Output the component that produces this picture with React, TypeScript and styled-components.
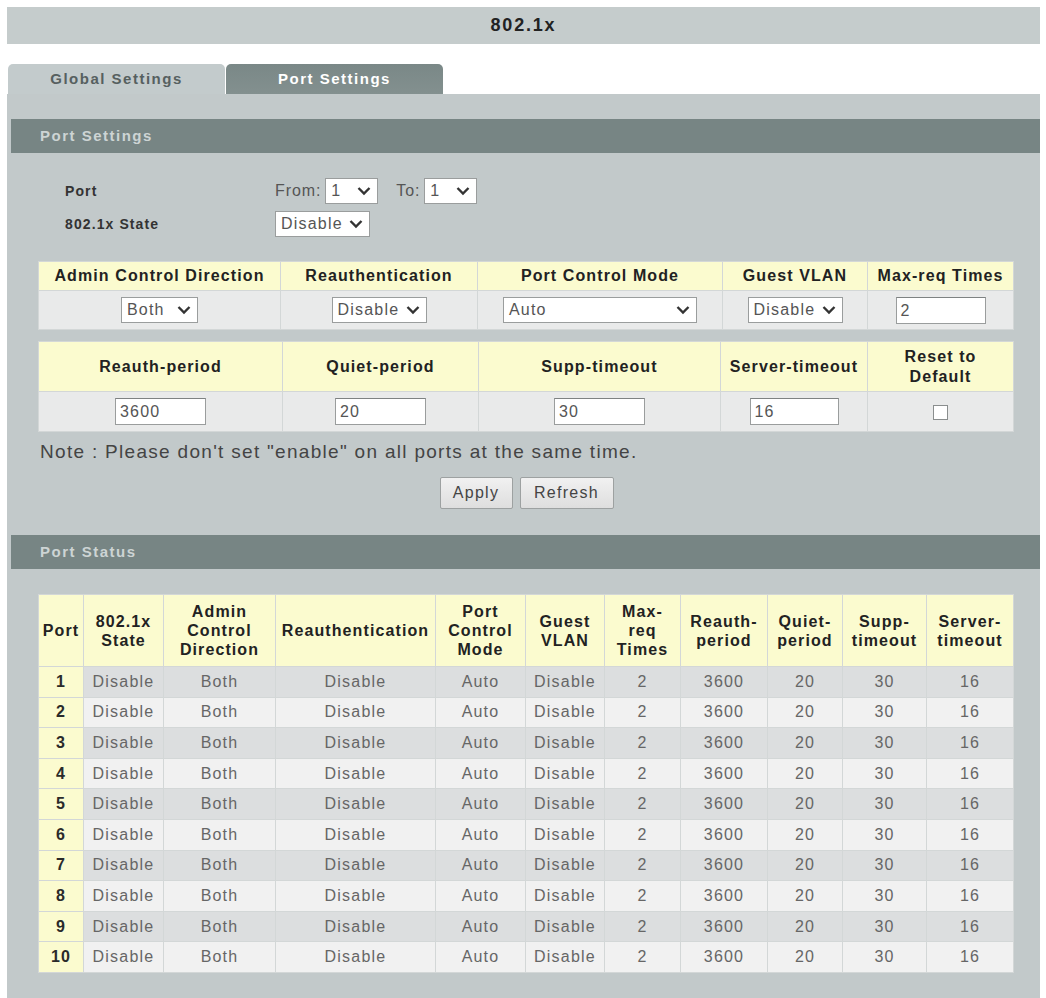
import React from 'react'
import styled, { createGlobalStyle } from 'styled-components'

const GlobalStyle = createGlobalStyle`
  html, body {
    margin: 0;
    padding: 0;
    background: #ffffff;
    font-family: "Liberation Sans", Arial, sans-serif;
  }
`

const colors = {
  panel: '#c2c9ca',
  title: '#c5cccc',
  bar: '#778584',
  barText: '#cdd4d4',
  yellow: '#fbfbcf',
  cellBorder: '#d3d7d7',
  rowDark: '#dcdedf',
  rowLight: '#f1f1f1',
  dataCell: '#e9eaea',
  text: '#222222',
  muted: '#666666',
}

// the screenshot is a bit wider than tall, so text gets extra tracking
const Page = styled.div`
  width: 1033px;
  padding: 7px 6px 0 7px;
  letter-spacing: 1.1px;
`

const TitleBar = styled.div`
  height: 37px;
  line-height: 37px;
  background: ${colors.title};
  text-align: center;
  font-size: 18px;
  letter-spacing: 1.8px;
  font-weight: 700;
  color: ${colors.text};
`

const TabRow = styled.div`
  display: flex;
  margin-top: 20px;
  padding-left: 1px;
  gap: 1px;
`

const Tab = styled.div<{ $active?: boolean }>`
  width: 217px;
  height: 30px;
  line-height: 30px;
  text-align: center;
  border-radius: 5px 5px 0 0;
  font-size: 15px;
  letter-spacing: 1.5px;
  font-weight: 700;
  background: ${({ $active }) => ($active ? 'linear-gradient(#7a8887, #83908f)' : '#c3cbcc')};
  color: ${({ $active }) => ($active ? '#ffffff' : '#566060')};
`

const Panel = styled.div`
  background: ${colors.panel};
  padding: 25px 0 25px 4px;
`

const SectionBar = styled.div<{ $gap?: number }>`
  height: 34px;
  line-height: 34px;
  margin-top: ${({ $gap }) => $gap ?? 0}px;
  padding-left: 29px;
  background: ${colors.bar};
  color: ${colors.barText};
  font-size: 15px;
  letter-spacing: 1.5px;
  font-weight: 700;
`

const Form = styled.div`
  display: grid;
  grid-template-columns: 210px auto;
  grid-auto-rows: 26px;
  row-gap: 7px;
  align-items: center;
  margin-top: 25px;
  padding-left: 54px;
`

const FormLabel = styled.div`
  font-size: 14px;
  letter-spacing: 1.1px;
  font-weight: 700;
  color: #333;
`

const FormControls = styled.div`
  display: flex;
  align-items: center;
  gap: 4px;
  font-size: 16px;
  letter-spacing: 0.9px;
  color: #555;
`

const Spacer = styled.span`
  width: 10px;
`

const SelectBox = styled.span<{ $width: number }>`
  display: inline-flex;
  align-items: center;
  justify-content: space-between;
  box-sizing: border-box;
  width: ${({ $width }) => $width}px;
  height: 26px;
  padding: 0 6px 0 5px;
  background: #ffffff;
  border: 1px solid #9a9d9d;
  font-size: 16px;
  letter-spacing: 1.2px;
  color: #555;
  text-align: left;
  vertical-align: middle;
`

const Chevron = () => (
  <svg width="14" height="10" viewBox="0 0 14 10">
    <path d="M1.5 2 L7 7.5 L12.5 2" fill="none" stroke="#333" strokeWidth="2.4" />
  </svg>
)

const Select: React.FC<{ value: string; width: number }> = ({ value, width }) => (
  <SelectBox $width={width}>
    <span>{value}</span>
    <Chevron />
  </SelectBox>
)

const TextInput = styled.span<{ $width: number }>`
  display: inline-block;
  box-sizing: border-box;
  width: ${({ $width }) => $width}px;
  height: 27px;
  line-height: 25px;
  padding-left: 4px;
  background: #ffffff;
  border: 1px solid #9a9d9d;
  border-top-color: #7e8282;
  font-size: 16px;
  letter-spacing: 1.2px;
  color: #555;
  text-align: left;
  vertical-align: middle;
`

const CheckBox = styled.span`
  display: inline-block;
  width: 13px;
  height: 13px;
  background: #ffffff;
  border: 1px solid #8a8e8e;
  vertical-align: middle;
`

const Grid = styled.table<{ $gap: number }>`
  width: 975px;
  margin: ${({ $gap }) => $gap}px 0 0 27px;
  border-collapse: collapse;
  table-layout: fixed;
`

const HeadCell = styled.th<{ $h?: number }>`
  height: ${({ $h }) => $h ?? 28}px;
  padding: 0;
  background: ${colors.yellow};
  border: 1px solid ${colors.cellBorder};
  font-size: 16px;
  line-height: 20px;
  font-weight: 700;
  color: ${colors.text};
  text-align: center;
`

const FieldCell = styled.td<{ $h: number }>`
  height: ${({ $h }) => $h}px;
  padding: 0;
  background: ${colors.dataCell};
  border: 1px solid ${colors.cellBorder};
  text-align: center;
`

const Note = styled.div`
  margin: 9px 0 0 29px;
  font-size: 19px;
  letter-spacing: 1.3px;
  color: #444;
`

const Buttons = styled.div`
  display: flex;
  justify-content: center;
  gap: 7px;
  margin: 14px 0 0 0;
  padding-left: 2px;
`

const Button = styled.button<{ $width: number }>`
  width: ${({ $width }) => $width}px;
  height: 32px;
  background: linear-gradient(#f1f1f1, #dedede);
  border: 1px solid #9da1a1;
  border-radius: 2px;
  font-family: "Liberation Sans", Arial, sans-serif;
  font-size: 16px;
  letter-spacing: 1.3px;
  color: #444;
  padding: 0;
`

const StatusHead = styled.th`
  height: 71px;
  padding: 0;
  background: ${colors.yellow};
  border: 1px solid ${colors.cellBorder};
  font-size: 16px;
  line-height: 19px;
  font-weight: 700;
  color: ${colors.text};
  text-align: center;
`

const PortCell = styled.td`
  height: 29.6px;
  padding: 0;
  background: ${colors.yellow};
  border: 1px solid ${colors.cellBorder};
  font-size: 16px;
  font-weight: 700;
  color: #2a2a2a;
  text-align: center;
`

const DataCell = styled.td<{ $odd: boolean }>`
  padding: 0;
  background: ${({ $odd }) => ($odd ? colors.rowDark : colors.rowLight)};
  border: 1px solid ${colors.cellBorder};
  font-size: 16px;
  letter-spacing: 1.2px;
  color: ${colors.muted};
  text-align: center;
`

const statusColumns: { label: React.ReactNode; width: number; value: string }[] = [
  { label: <>802.1x<br />State</>, width: 80, value: 'Disable' },
  { label: <>Admin<br />Control<br />Direction</>, width: 112, value: 'Both' },
  { label: 'Reauthentication', width: 160, value: 'Disable' },
  { label: <>Port<br />Control<br />Mode</>, width: 90, value: 'Auto' },
  { label: <>Guest<br />VLAN</>, width: 79, value: 'Disable' },
  { label: <>Max-<br />req<br />Times</>, width: 76, value: '2' },
  { label: <>Reauth-<br />period</>, width: 87, value: '3600' },
  { label: <>Quiet-<br />period</>, width: 75, value: '20' },
  { label: <>Supp-<br />timeout</>, width: 84, value: '30' },
  { label: <>Server-<br />timeout</>, width: 87, value: '16' },
]

const ports = Array.from({ length: 10 }, (_, i) => i + 1)

export default function App() {
  return (
    <Page>
      <GlobalStyle />
      <TitleBar>802.1x</TitleBar>

      <TabRow>
        <Tab>Global Settings</Tab>
        <Tab $active>Port Settings</Tab>
      </TabRow>

      <Panel>
        <SectionBar>Port Settings</SectionBar>

        <Form>
          <FormLabel>Port</FormLabel>
          <FormControls>
            <span>From:</span>
            <Select value="1" width={53} />
            <Spacer />
            <span>To:</span>
            <Select value="1" width={53} />
          </FormControls>
          <FormLabel>802.1x State</FormLabel>
          <FormControls>
            <Select value="Disable" width={95} />
          </FormControls>
        </Form>

        <Grid $gap={24}>
          <colgroup>
            <col style={{ width: 242 }} />
            <col style={{ width: 197 }} />
            <col style={{ width: 245 }} />
            <col style={{ width: 145 }} />
            <col style={{ width: 146 }} />
          </colgroup>
          <thead>
            <tr>
              <HeadCell>Admin Control Direction</HeadCell>
              <HeadCell>Reauthentication</HeadCell>
              <HeadCell>Port Control Mode</HeadCell>
              <HeadCell>Guest VLAN</HeadCell>
              <HeadCell>Max-req Times</HeadCell>
            </tr>
          </thead>
          <tbody>
            <tr>
              <FieldCell $h={38}><Select value="Both" width={77} /></FieldCell>
              <FieldCell $h={38}><Select value="Disable" width={95} /></FieldCell>
              <FieldCell $h={38}><Select value="Auto" width={194} /></FieldCell>
              <FieldCell $h={38}><Select value="Disable" width={95} /></FieldCell>
              <FieldCell $h={38}><TextInput $width={90}>2</TextInput></FieldCell>
            </tr>
          </tbody>
        </Grid>

        <Grid $gap={11}>
          <colgroup>
            <col style={{ width: 244 }} />
            <col style={{ width: 196 }} />
            <col style={{ width: 242 }} />
            <col style={{ width: 147 }} />
            <col style={{ width: 146 }} />
          </colgroup>
          <thead>
            <tr>
              <HeadCell $h={49}>Reauth-period</HeadCell>
              <HeadCell $h={49}>Quiet-period</HeadCell>
              <HeadCell $h={49}>Supp-timeout</HeadCell>
              <HeadCell $h={49}>Server-timeout</HeadCell>
              <HeadCell $h={49}>Reset to<br />Default</HeadCell>
            </tr>
          </thead>
          <tbody>
            <tr>
              <FieldCell $h={39}><TextInput $width={91}>3600</TextInput></FieldCell>
              <FieldCell $h={39}><TextInput $width={91}>20</TextInput></FieldCell>
              <FieldCell $h={39}><TextInput $width={91}>30</TextInput></FieldCell>
              <FieldCell $h={39}><TextInput $width={89}>16</TextInput></FieldCell>
              <FieldCell $h={39}><CheckBox /></FieldCell>
            </tr>
          </tbody>
        </Grid>

        <Note>Note : Please don't set "enable" on all ports at the same time.</Note>

        <Buttons>
          <Button $width={73}>Apply</Button>
          <Button $width={94}>Refresh</Button>
        </Buttons>

        <SectionBar $gap={26}>Port Status</SectionBar>

        <Grid $gap={25}>
          <colgroup>
            <col style={{ width: 45 }} />
            {statusColumns.map((c, i) => (
              <col key={i} style={{ width: c.width }} />
            ))}
          </colgroup>
          <thead>
            <tr>
              <StatusHead>Port</StatusHead>
              {statusColumns.map((c, i) => (
                <StatusHead key={i}>{c.label}</StatusHead>
              ))}
            </tr>
          </thead>
          <tbody>
            {ports.map((port) => (
              <tr key={port}>
                <PortCell>{port}</PortCell>
                {statusColumns.map((c, i) => (
                  <DataCell key={i} $odd={port % 2 === 1}>{c.value}</DataCell>
                ))}
              </tr>
            ))}
          </tbody>
        </Grid>
      </Panel>
    </Page>
  )
}
